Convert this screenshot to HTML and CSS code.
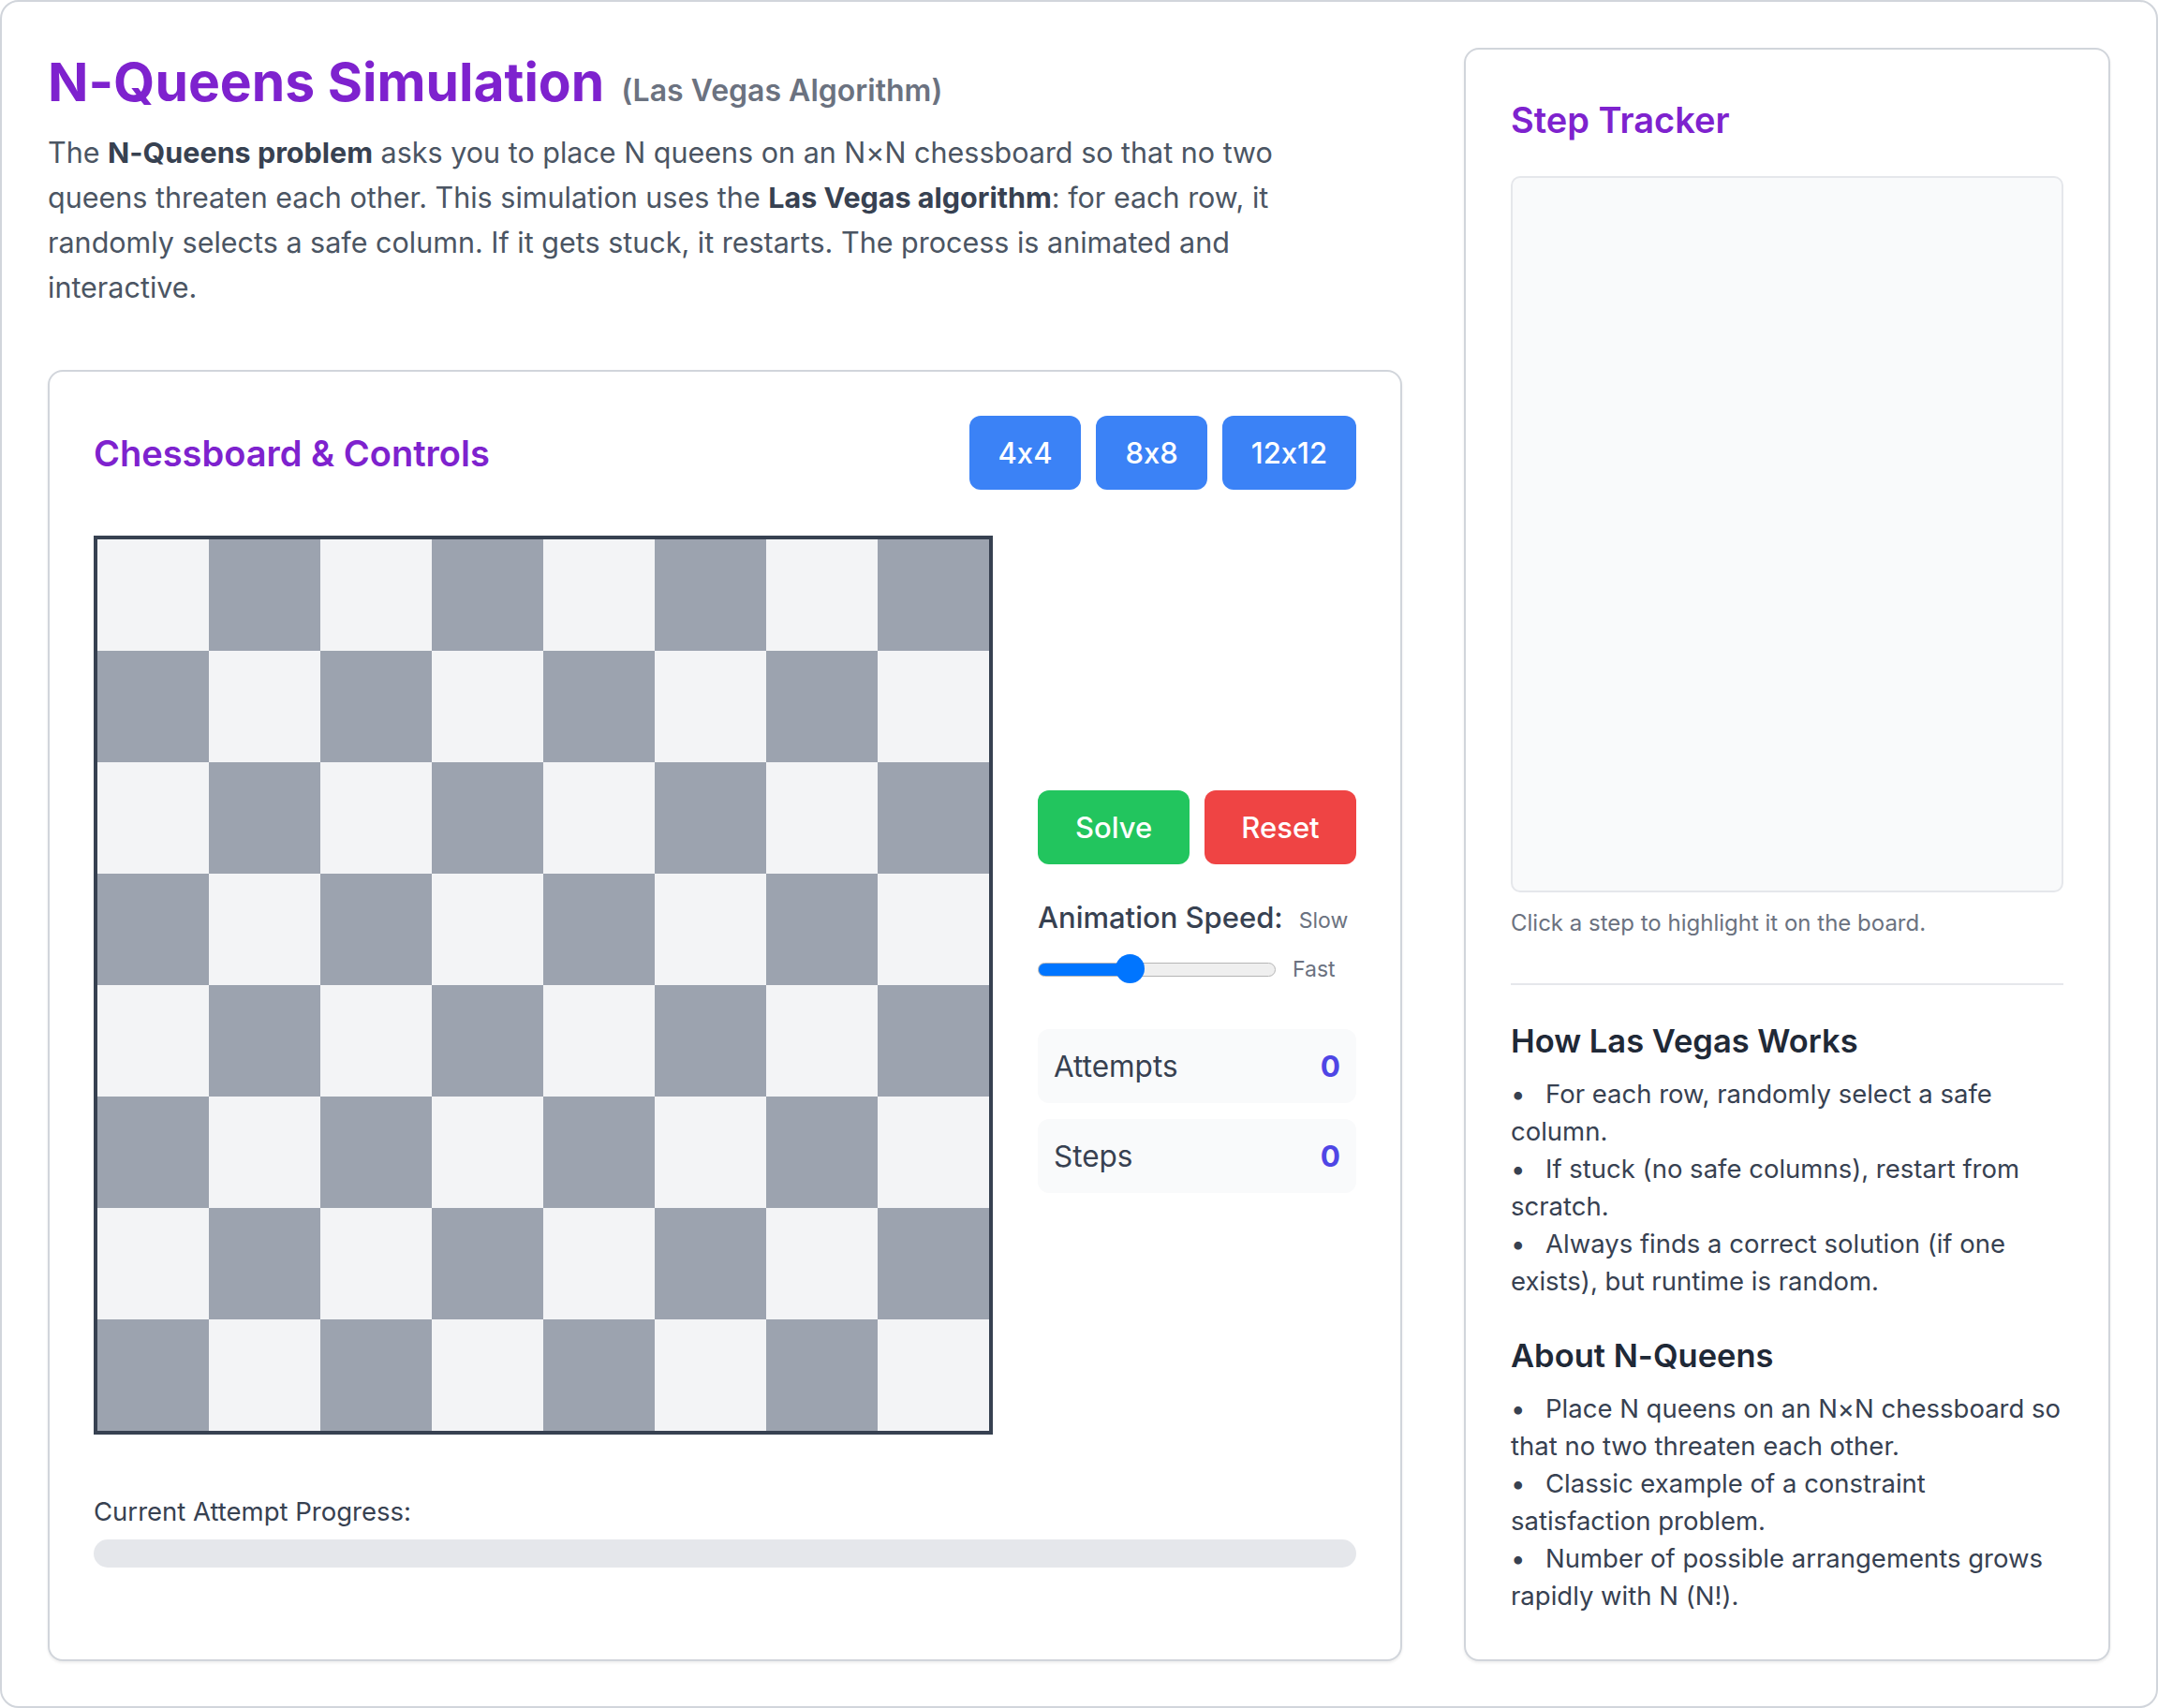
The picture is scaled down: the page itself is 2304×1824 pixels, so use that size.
FILE: index.html
```html
<!DOCTYPE html>
<html lang="en">
<head>
<meta charset="utf-8">
<title>N-Queens Simulation (Las Vegas Algorithm)</title>
<link rel="stylesheet" href="styles.css">
</head>
<body>
<div class="page">
  <main class="main">
    <header class="intro">
      <h1 class="title">N-Queens Simulation<span class="title-sub">(Las Vegas Algorithm)</span></h1>
      <p class="lead">The <strong>N-Queens problem</strong> asks you to place N queens on an N×N chessboard so that no two queens threaten each other. This simulation uses the <strong>Las Vegas algorithm</strong>: for each row, it randomly selects a safe column. If it gets stuck, it restarts. The process is animated and interactive.</p>
    </header>
    <section class="card board-card">
      <div class="card-head">
        <h2 class="card-title">Chessboard &amp; Controls</h2>
        <div class="size-btns">
          <button class="btn btn-blue">4x4</button>
          <button class="btn btn-blue">8x8</button>
          <button class="btn btn-blue">12x12</button>
        </div>
      </div>
      <div class="board-row">
        <div class="board">
          <div class="cell l"></div><div class="cell d"></div><div class="cell l"></div><div class="cell d"></div><div class="cell l"></div><div class="cell d"></div><div class="cell l"></div><div class="cell d"></div>
          <div class="cell d"></div><div class="cell l"></div><div class="cell d"></div><div class="cell l"></div><div class="cell d"></div><div class="cell l"></div><div class="cell d"></div><div class="cell l"></div>
          <div class="cell l"></div><div class="cell d"></div><div class="cell l"></div><div class="cell d"></div><div class="cell l"></div><div class="cell d"></div><div class="cell l"></div><div class="cell d"></div>
          <div class="cell d"></div><div class="cell l"></div><div class="cell d"></div><div class="cell l"></div><div class="cell d"></div><div class="cell l"></div><div class="cell d"></div><div class="cell l"></div>
          <div class="cell l"></div><div class="cell d"></div><div class="cell l"></div><div class="cell d"></div><div class="cell l"></div><div class="cell d"></div><div class="cell l"></div><div class="cell d"></div>
          <div class="cell d"></div><div class="cell l"></div><div class="cell d"></div><div class="cell l"></div><div class="cell d"></div><div class="cell l"></div><div class="cell d"></div><div class="cell l"></div>
          <div class="cell l"></div><div class="cell d"></div><div class="cell l"></div><div class="cell d"></div><div class="cell l"></div><div class="cell d"></div><div class="cell l"></div><div class="cell d"></div>
          <div class="cell d"></div><div class="cell l"></div><div class="cell d"></div><div class="cell l"></div><div class="cell d"></div><div class="cell l"></div><div class="cell d"></div><div class="cell l"></div>
        </div>
        <div class="controls">
          <div class="action-btns">
            <button class="btn btn-green">Solve</button>
            <button class="btn btn-red">Reset</button>
          </div>
          <div class="speed-label-row">
            <label class="speed-label" for="speed">Animation Speed:</label>
            <span class="speed-hint">Slow</span>
          </div>
          <div class="speed-slider-row">
            <input id="speed" class="slider" type="range" min="0" max="100" value="37" style="--fill: 99px">
            <span class="speed-hint">Fast</span>
          </div>
          <div class="stats">
            <div class="stat"><span>Attempts</span><span class="stat-value">0</span></div>
            <div class="stat"><span>Steps</span><span class="stat-value">0</span></div>
          </div>
        </div>
      </div>
      <div class="progress">
        <div class="progress-label">Current Attempt Progress:</div>
        <div class="progress-track"><div class="progress-fill" style="width: 0%"></div></div>
      </div>
    </section>
  </main>
  <aside class="card side">
    <h2 class="side-title">Step Tracker</h2>
    <div class="steps-box"></div>
    <p class="hint">Click a step to highlight it on the board.</p>
    <hr class="divider">
    <h3 class="info-title">How Las Vegas Works</h3>
    <ul class="info-list">
      <li>For each row, randomly select a safe column.</li>
      <li>If stuck (no safe columns), restart from scratch.</li>
      <li>Always finds a correct solution (if one exists), but runtime is random.</li>
    </ul>
    <h3 class="info-title">About N-Queens</h3>
    <ul class="info-list">
      <li>Place N queens on an N×N chessboard so that no two threaten each other.</li>
      <li>Classic example of a constraint satisfaction problem.</li>
      <li>Number of possible arrangements grows rapidly with N (N!).</li>
    </ul>
  </aside>
</div>
</body>
</html>
```
FILE: styles.css
```css
* { box-sizing: border-box; }
html, body { margin: 0; background: #fff; }
body {
  font-family: Inter, "Noto Sans", "Liberation Sans", sans-serif;
  font-feature-settings: "calt" 0;
  color: #374151;
}

.page {
  height: 1824px;
  border: 2px solid #d1d5db;
  border-radius: 20px;
  padding: 49px;
  display: grid;
  grid-template-columns: repeat(3, 1fr);
  column-gap: 66px;
}

.main {
  grid-column: span 2;
  display: flex;
  flex-direction: column;
  min-height: 0;
}

.title {
  margin: 0;
  font-size: 57px;
  line-height: 74px;
  font-weight: 700;
  color: #7e22ce;
}
.title-sub {
  margin-left: 18px;
  font-size: 32px;
  font-weight: 600;
  color: #6b7280;
}
.lead {
  max-width: 1344px;
  margin: 5px 0 0;
  font-size: 30.5px;
  line-height: 48px;
  color: #4b5563;
}
.lead strong { color: #374151; font-weight: 700; }

.card {
  background: #fff;
  border: 2px solid #d1d5db;
  border-radius: 16px;
  box-shadow: 0 2px 3px rgba(0, 0, 0, 0.07);
}

.board-card {
  margin-top: 64px;
  flex: 1;
  padding: 47px;
}
.card-head {
  display: flex;
  justify-content: space-between;
  align-items: center;
  height: 79px;
}
.card-title {
  margin: 0;
  font-size: 38px;
  line-height: 54px;
  font-weight: 600;
  color: #7e22ce;
}
.size-btns { display: flex; gap: 16px; }

.btn {
  border: 0;
  border-radius: 12px;
  color: #fff;
  font-family: inherit;
  font-feature-settings: "calt" 0;
  font-size: 31px;
  font-weight: 500;
  line-height: 1;
  height: 79px;
  padding: 0 31px;
}
.btn-blue { background: #3b82f6; }
.btn-green { background: #22c55e; }
.btn-red { background: #ef4444; }

.board-row {
  margin-top: 49px;
  display: flex;
  align-items: center;
  gap: 48px;
}
.board {
  flex: none;
  display: grid;
  grid-template-columns: repeat(8, 119px);
  grid-auto-rows: 119px;
  border: 4px solid #374151;
}
.cell.l { background: #f3f4f6; }
.cell.d { background: #9ca3af; }

.controls {
  flex: 1;
  padding-top: 14px;
  display: flex;
  flex-direction: column;
}
.action-btns { display: flex; gap: 16px; }
.action-btns .btn { flex: 1; padding: 0; }

.speed-label-row {
  margin-top: 34px;
  display: flex;
  align-items: baseline;
  gap: 17px;
}
.speed-label {
  font-size: 31px;
  line-height: 45px;
  font-weight: 500;
  color: #374151;
}
.speed-hint { font-size: 23px; color: #6b7280; }

.speed-slider-row {
  margin-top: 17px;
  height: 32px;
  display: flex;
  align-items: center;
  gap: 18px;
}
.slider {
  -webkit-appearance: none;
  appearance: none;
  margin: 0;
  width: 254px;
  height: 32px;
  background: transparent;
}
.slider::-webkit-slider-runnable-track {
  height: 15px;
  border-radius: 8px;
  border: 1.5px solid #b5b5b5;
  background: linear-gradient(to right, #0075ff 0, #0075ff var(--fill), #efefef var(--fill));
}
.slider::-webkit-slider-thumb {
  -webkit-appearance: none;
  appearance: none;
  width: 31px;
  height: 31px;
  border-radius: 50%;
  border: 0;
  background: #0075ff;
  margin-top: -9.5px;
}

.stats {
  margin-top: 48px;
  display: flex;
  flex-direction: column;
  gap: 17px;
}
.stat {
  height: 79px;
  padding: 0 17px;
  border-radius: 12px;
  background: #f9fafb;
  display: flex;
  justify-content: space-between;
  align-items: center;
  font-size: 31.5px;
  color: #374151;
}
.stat-value { font-weight: 700; color: #4f46e5; }

.progress { margin-top: 64px; }
.progress-label {
  font-size: 27.5px;
  line-height: 36px;
  color: #374151;
}
.progress-track {
  margin-top: 12px;
  height: 30px;
  border-radius: 15px;
  background: #e5e7eb;
  overflow: hidden;
}
.progress-fill { height: 100%; background: #8b5cf6; }

.side { padding: 48px; }
.side-title {
  margin: 0;
  font-size: 38px;
  line-height: 54px;
  font-weight: 600;
  color: #7e22ce;
}
.steps-box {
  margin-top: 33px;
  height: 765px;
  background: #f9fafb;
  border: 2px solid #e5e7eb;
  border-radius: 10px;
}
.hint {
  margin: 17px 0 0;
  font-size: 24px;
  line-height: 32px;
  color: #6b7280;
}
.divider {
  margin: 48px 0 0;
  border: 0;
  border-top: 2px solid #e5e7eb;
}
.info-title {
  margin: 38px 0 0;
  font-size: 34.5px;
  line-height: 44px;
  font-weight: 600;
  color: #1f2937;
}
.info-list {
  margin: 14px 0 0;
  padding: 0;
  list-style: none;
  font-size: 27.5px;
  line-height: 40px;
  color: #374151;
}
.info-list li::before {
  content: "•";
  display: inline-block;
  width: 37px;
}
```
